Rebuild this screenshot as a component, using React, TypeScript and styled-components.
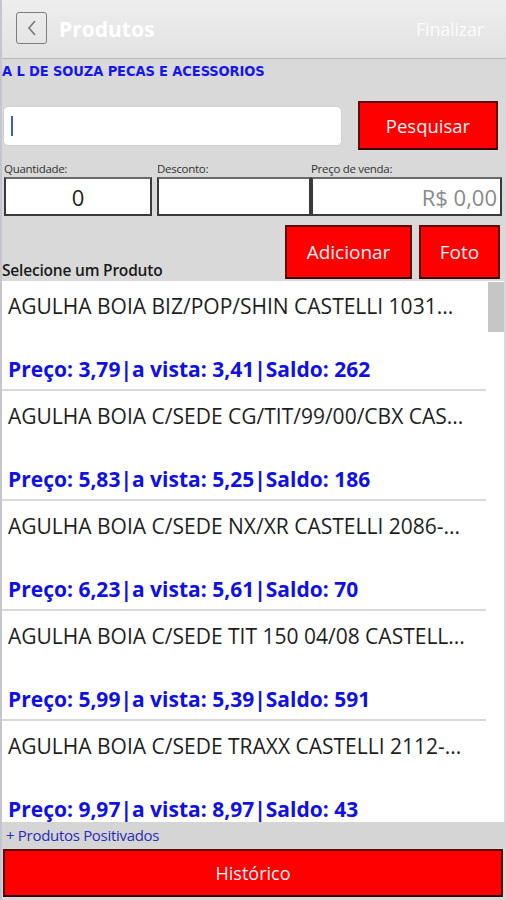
import React from "react";
import styled, { createGlobalStyle } from "styled-components";

const Global = createGlobalStyle`
  html, body { margin: 0; padding: 0; background: #d9d9d9; }
  body { width: 506px; height: 900px; overflow: hidden; font-family: "Open Sans", "Noto Sans", sans-serif; }
  * { box-sizing: border-box; }
`;

const Page = styled.div`
  width: 506px;
  height: 900px;
  display: flex;
  flex-direction: column;
  background: #d9d9d9;
  border-left: 2px solid #c3c5cf;
`;

const Header = styled.header`
  height: 59px;
  flex: none;
  display: flex;
  align-items: center;
  padding: 0 22px 0 14px;
  background: linear-gradient(#eeeeee, #e2e2e2);
  border-bottom: 1px solid #b9b9b9;
`;

const BackButton = styled.button`
  width: 31px;
  height: 32px;
  padding: 0;
  display: flex;
  align-items: center;
  justify-content: center;
  background: transparent;
  border: 1.5px solid #7d7d7d;
  border-radius: 3px;
  margin-top: -2px;
`;

const Title = styled.h1`
  margin: 0 0 0 12px;
  font-size: 21px;
  font-weight: 700;
  color: #ffffff;
  flex: 1;
`;

const Finalize = styled.span`
  font-size: 18px;
  color: #fbfbfb;
  letter-spacing: -0.2px;
`;

const Company = styled.div`
  height: 42px;
  flex: none;
  padding: 4px 0 0 0;
  font-family: "DejaVu Sans Condensed", "DejaVu Sans", sans-serif;
  font-weight: 700;
  font-size: 14.5px;
  letter-spacing: -0.1px;
  color: #1515ee;
`;

const SearchRow = styled.div`
  height: 49px;
  flex: none;
  display: flex;
  align-items: center;
  gap: 16px;
  padding: 0 6px 0 1px;
`;

const SearchInput = styled.div`
  width: 339px;
  height: 40px;
  background: #ffffff;
  border: 1px solid #cfcfcf;
  border-radius: 5px;
  display: flex;
  align-items: center;
  padding-left: 7px;
`;

const Caret = styled.span`
  width: 2px;
  height: 20px;
  background: #3a5fcd;
`;

const RedButton = styled.button<{ $w: number; $h: number; $fs: number }>`
  width: ${(p) => p.$w}px;
  height: ${(p) => p.$h}px;
  flex: none;
  background: #ff0000;
  border: 2px solid #5a0a0a;
  border-bottom-color: #3a0000;
  color: #fff4f4;
  font-family: "Open Sans", sans-serif;
  font-size: ${(p) => p.$fs}px;
  padding: 0;
`;

const Fields = styled.div`
  flex: none;
  display: flex;
  padding: 12px 0 0 2px;
`;

const Field = styled.div<{ $w: number; $mr: number }>`
  width: ${(p) => p.$w}px;
  margin-right: ${(p) => p.$mr}px;
  display: flex;
  flex-direction: column;
`;

const FieldLabel = styled.label`
  height: 15px;
  font-size: 11.5px;
  color: #333;
  letter-spacing: -0.3px;
  line-height: 14px;
  white-space: nowrap;
`;

const FieldBox = styled.div<{ $align: string; $muted?: boolean }>`
  height: 39px;
  background: #fff;
  border: 2px solid #3a3a3a;
  border-top-color: #6a6a6a;
  display: flex;
  align-items: center;
  justify-content: ${(p) => p.$align};
  padding: 0 3px;
  font-size: 22px;
  color: ${(p) => (p.$muted ? "#8a8a8a" : "#222")};
`;

const ActionRow = styled.div`
  height: 65px;
  flex: none;
  display: flex;
  align-items: flex-end;
  padding: 0 6px 2px 0;
`;

const SelectLabel = styled.div`
  flex: 1;
  font-size: 15.5px;
  font-weight: 600;
  color: #1a1a1a;
  letter-spacing: -0.2px;
  line-height: 18px;
`;

const ActionButtons = styled.div`
  display: flex;
  gap: 7px;
`;

const List = styled.div`
  position: relative;
  flex: 1;
  min-height: 0;
  overflow: hidden;
  background: #ffffff;
  margin-right: 2px;
  padding-right: 18px;
`;

const ScrollThumb = styled.div`
  position: absolute;
  top: 1px;
  right: 0;
  width: 16px;
  height: 50px;
  background: #c6c6c6;
`;

const Item = styled.div`
  height: 110px;
  padding: 12px 0 0 6px;
  border-bottom: 2px solid #dadada;
`;

const ItemName = styled.div`
  font-size: 21px;
  line-height: 26px;
  color: #1e1e1e;
  white-space: nowrap;
`;

const ItemPrice = styled.div`
  margin-top: 37px;
  font-size: 21px;
  line-height: 26px;
  font-weight: 700;
  color: #1010e6;
  white-space: nowrap;
`;

const LinkStrip = styled.div`
  height: 26px;
  flex: none;
  display: flex;
  align-items: center;
  padding-left: 4px;
  background: #d5d5d5;
  font-size: 15px;
  color: #2a2ab8;
  letter-spacing: -0.3px;
`;

const Bottom = styled.div`
  flex: none;
  padding: 1px 3px 3px 1px;
`;

const products = [
  { name: "AGULHA BOIA BIZ/POP/SHIN CASTELLI 1031...", price: "3,79", vista: "3,41", saldo: "262" },
  { name: "AGULHA BOIA C/SEDE CG/TIT/99/00/CBX CAS...", price: "5,83", vista: "5,25", saldo: "186" },
  { name: "AGULHA BOIA C/SEDE NX/XR CASTELLI 2086-...", price: "6,23", vista: "5,61", saldo: "70" },
  { name: "AGULHA BOIA C/SEDE TIT 150 04/08 CASTELL...", price: "5,99", vista: "5,39", saldo: "591" },
  { name: "AGULHA BOIA C/SEDE TRAXX CASTELLI 2112-...", price: "9,97", vista: "8,97", saldo: "43" },
];

export default function App() {
  return (
    <>
      <Global />
      <Page>
        <Header>
          <BackButton aria-label="Voltar">
            <svg width="12" height="20" viewBox="0 0 12 20">
              <path d="M9 3 L3 10 L9 17" fill="none" stroke="#777" strokeWidth="1.6" />
            </svg>
          </BackButton>
          <Title>Produtos</Title>
          <Finalize>Finalizar</Finalize>
        </Header>
        <Company>A L DE SOUZA PECAS E ACESSORIOS</Company>
        <SearchRow>
          <SearchInput>
            <Caret />
          </SearchInput>
          <RedButton $w={140} $h={49} $fs={18.5}>Pesquisar</RedButton>
        </SearchRow>
        <Fields>
          <Field $w={148} $mr={5}>
            <FieldLabel>Quantidade:</FieldLabel>
            <FieldBox $align="center">0</FieldBox>
          </Field>
          <Field $w={154} $mr={0}>
            <FieldLabel>Desconto:</FieldLabel>
            <FieldBox $align="flex-end" />
          </Field>
          <Field $w={191} $mr={0}>
            <FieldLabel>Preço de venda:</FieldLabel>
            <FieldBox $align="flex-end" $muted>R$ 0,00</FieldBox>
          </Field>
        </Fields>
        <ActionRow>
          <SelectLabel>Selecione um Produto</SelectLabel>
          <ActionButtons>
            <RedButton $w={127} $h={54} $fs={19}>Adicionar</RedButton>
            <RedButton $w={81} $h={54} $fs={19}>Foto</RedButton>
          </ActionButtons>
        </ActionRow>
        <List>
          {products.map((p) => (
            <Item key={p.name}>
              <ItemName>{p.name}</ItemName>
              <ItemPrice>
                Preço: {p.price}|a vista: {p.vista}|Saldo: {p.saldo}
              </ItemPrice>
            </Item>
          ))}
          <ScrollThumb />
        </List>
        <LinkStrip>+ Produtos Positivados</LinkStrip>
        <Bottom>
          <RedButton $w={500} $h={48} $fs={18}>Histórico</RedButton>
        </Bottom>
      </Page>
    </>
  );
}
